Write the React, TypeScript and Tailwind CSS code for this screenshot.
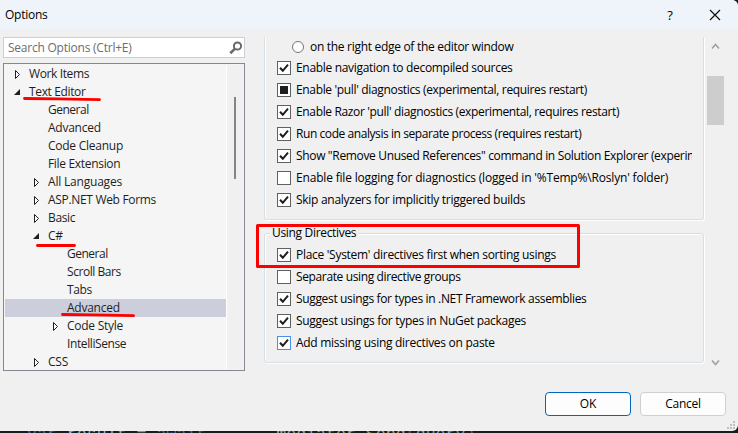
import React from "react";

const treeRows: { t: string; pad: string; arrow?: "open" | "closed"; sel?: boolean; track: string }[] = [
  { t: "Work Items", pad: "pl-[8px]", arrow: "closed", track: "tracking-[-0.38px]" },
  { t: "Text Editor", pad: "pl-[8px]", arrow: "open", track: "tracking-[-0.36px]" },
  { t: "General", pad: "pl-[27px]", track: "tracking-[-0.5px]" },
  { t: "Advanced", pad: "pl-[27px]", track: "tracking-[-0.25px]" },
  { t: "Code Cleanup", pad: "pl-[27px]", track: "tracking-[-0.25px]" },
  { t: "File Extension", pad: "pl-[27px]", track: "tracking-[-0.32px]" },
  { t: "All Languages", pad: "pl-[27px]", arrow: "closed", track: "tracking-[-0.2px]" },
  { t: "ASP.NET Web Forms", pad: "pl-[27px]", arrow: "closed", track: "tracking-[-0.32px]" },
  { t: "Basic", pad: "pl-[27px]", arrow: "closed", track: "tracking-[-0.35px]" },
  { t: "C#", pad: "pl-[27px]", arrow: "open", track: "tracking-[-0.25px]" },
  { t: "General", pad: "pl-[46px]", track: "tracking-[-0.5px]" },
  { t: "Scroll Bars", pad: "pl-[46px]", track: "tracking-[-0.45px]" },
  { t: "Tabs", pad: "pl-[46px]", track: "tracking-[-0.4px]" },
  { t: "Advanced", pad: "pl-[46px]", sel: true, track: "tracking-[-0.25px]" },
  { t: "Code Style", pad: "pl-[46px]", arrow: "closed", track: "tracking-[-0.25px]" },
  { t: "IntelliSense", pad: "pl-[46px]", track: "tracking-[-0.4px]" },
  { t: "CSS", pad: "pl-[27px]", arrow: "closed", track: "tracking-[-0.25px]" },
];

function Arrow({ kind }: { kind?: "open" | "closed" }) {
  return (
    <svg width="16" height="18" viewBox="0 0 16 18" className="shrink-0">
      {kind === "closed" && <path d="M2.5 5.5v8l4-4z" fill="#fff" stroke="#1e1e1e" />}
      {kind === "open" && <path d="M7 6v6H1z" fill="#1e1e1e" />}
    </svg>
  );
}

type State = "on" | "off" | "mixed";

function Check({ state, blue, children, track }: { state: State; blue?: boolean; children: string; track: string }) {
  return (
    <div className="flex h-[22px] items-center">
      <svg width="14" height="14" viewBox="0 0 14 14" className="shrink-0">
        <rect x="0.5" y="0.5" width="13" height="13" fill="#fff" stroke={blue ? "#4a90e8" : "#606060"} />
        {state === "on" && <path d="M3 6.8l2.8 3L11 3.6" fill="none" stroke="#1e1e1e" strokeWidth="2" />}
        {state === "mixed" && <rect x="3" y="3" width="8" height="8" fill="#1e1e1e" />}
      </svg>
      <span className={`ml-[5px] ${track}`}>{children}</span>
    </div>
  );
}

export default function App() {
  return (
    <div className="relative flex h-[433px] w-[738px] flex-col overflow-hidden bg-[#1b1b1f] font-['Open_Sans','Noto_Sans',sans-serif] text-[12px] leading-[18px] whitespace-nowrap text-black">
      <div className="flex h-[431px] shrink-0 flex-col overflow-hidden rounded-tr-[6px] rounded-br-[6px] bg-[#f0f0f0]">
        <header className="flex h-[29px] shrink-0 items-center bg-[#eef4f9] pl-[5px]">
          <span className="tracking-[-0.25px]">Options</span>
          <span className="ml-auto w-[6px] text-center text-[13px]">?</span>
          <svg width="12" height="12" viewBox="0 0 12 12" className="mr-[17px] ml-[36px]">
            <path d="M1 1l10 10M11 1L1 11" stroke="#111" strokeWidth="1.2" />
          </svg>
        </header>
        <div className="flex h-[342px] shrink-0">
          <aside className="ml-[3px] flex w-[242px] flex-col pt-[8px]">
            <div className="flex h-[21px] shrink-0 items-center border border-[#cccedb] bg-white pl-[4px] text-[#6d6d6d]">
              <span className="tracking-[-0.23px]">Search Options (Ctrl+E)</span>
              <svg width="14" height="14" viewBox="0 0 14 14" className="mr-[1px] ml-auto">
                <circle cx="8.5" cy="5" r="3.6" fill="none" stroke="#6a6a6a" strokeWidth="2" />
                <path d="M6 7.6L1.3 12.2" stroke="#6a6a6a" strokeWidth="2.6" />
              </svg>
            </div>
            <div className="mt-[5px] flex h-[308px] shrink-0 overflow-hidden border border-[#828790] bg-[#f5f5f5] p-px">
              <div className="flex w-[221px] flex-col text-[#1e1e1e]">
                {treeRows.map((r, i) => (
                  <div key={i} className={`flex h-[18px] shrink-0 items-center ${r.pad} ${r.sel ? "bg-[#cccedb]" : ""}`}>
                    <Arrow kind={r.arrow} />
                    <span className={r.track}>{r.t}</span>
                  </div>
                ))}
              </div>
              <div className="h-[304px] w-[17px] border-l border-white bg-[#f0f0f0] pt-[32px] pl-[7px]">
                <div className="h-[82px] w-[2px] bg-[#858585]" />
              </div>
            </div>
          </aside>
          <main className="ml-[19px] flex w-[440px] flex-col pt-[8px]">
            <section className="h-[183px] shrink-0 overflow-hidden rounded-b-[3px] border border-t-0 border-[#d5dfe5] pr-[11px] pl-[12px] shadow-[inset_1px_0_0_#fff,1px_1px_0_#fff]">
              <div className="overflow-hidden">
                <div className="flex h-[20px] items-center pl-[15px]">
                  <span className="size-[12px] rounded-full border border-[#757575] bg-white" />
                  <span className="ml-[6px] tracking-[-0.3px]">on the right edge of the editor window</span>
                </div>
                <Check state="on" track="tracking-[-0.32px]">Enable navigation to decompiled sources</Check>
                <Check state="mixed" track="tracking-[-0.34px]">Enable 'pull' diagnostics (experimental, requires restart)</Check>
                <Check state="on" track="tracking-[-0.35px]">Enable Razor 'pull' diagnostics (experimental, requires restart)</Check>
                <Check state="on" track="tracking-[-0.43px]">Run code analysis in separate process (requires restart)</Check>
                <Check state="on" track="tracking-[-0.34px]">Show "Remove Unused References" command in Solution Explorer (experimental)</Check>
                <Check state="off" track="tracking-[-0.18px]">Enable file logging for diagnostics (logged in '%Temp%\Roslyn' folder)</Check>
                <Check state="on" track="tracking-[-0.28px]">Skip analyzers for implicitly triggered builds</Check>
              </div>
            </section>
            <section className="mt-[13px] h-[130px] shrink-0 rounded-[3px] border border-[#d5dfe5] pl-[12px] shadow-[inset_1px_1px_0_#fff,1px_1px_0_#fff]">
              <div className="-mt-[10px] -ml-[7px] flex">
                <span className="bg-[#f0f0f0] px-[2px] tracking-[-0.32px]">Using Directives</span>
              </div>
              <div className="pt-[2px]">
                <Check state="on" track="tracking-[-0.29px]">Place 'System' directives first when sorting usings</Check>
                <Check state="off" track="tracking-[-0.37px]">Separate using directive groups</Check>
                <Check state="on" track="tracking-[-0.34px]">Suggest usings for types in .NET Framework assemblies</Check>
                <Check state="on" track="tracking-[-0.3px]">Suggest usings for types in NuGet packages</Check>
                <Check state="on" blue track="tracking-[-0.28px]">Add missing using directives on paste</Check>
              </div>
            </section>
          </main>
          <div className="ml-[3px] flex w-[17px] flex-col items-center pt-[14px]">
            <svg width="9" height="7" viewBox="0 0 9 7"><path d="M1 5.5l3.5-4 3.5 4" fill="none" stroke="#a0a0a0" strokeWidth="1.6" /></svg>
            <div className="mt-[26px] h-[49px] w-[17px] bg-[#cdcdcd]" />
            <svg width="9" height="7" viewBox="0 0 9 7" className="mt-auto mb-[5px]"><path d="M1 1.5l3.5 4 3.5-4" fill="none" stroke="#a0a0a0" strokeWidth="1.6" /></svg>
          </div>
        </div>
        <footer className="flex gap-[9px] pt-[21px] pl-[545px]">
          <button className="h-[24px] w-[86px] rounded-[4px] border border-[#0067c0] bg-[#fdfdfd] leading-[20px]">OK</button>
          <button className="h-[24px] w-[86px] rounded-[4px] border border-[#d0d0d0] bg-[#fdfdfd] leading-[20px] tracking-[-0.25px]">Cancel</button>
        </footer>
      </div>
      <div className="flex h-[2px] shrink-0 overflow-hidden pl-[27px] font-['Liberation_Mono',monospace] text-[16.6px] leading-[18px] whitespace-pre">
        <div className="-mt-[5px]">
          <span className="text-[#3f6f9c]">var </span>
          <span className="text-[#82b4cf]">result </span>
          <span className="text-[#909090]">= </span>
          <span className="text-[#3f6f9c]">await </span>
          <span className="ml-[60px] text-[#a0a0a0]">mediator </span>
          <span className="text-[#a8a37a]">Send</span>
          <span className="text-[#8a3fa0]">(</span>
          <span className="text-[#6fa0b8]">query</span>
          <span className="text-[#8a3fa0]">)</span>
        </div>
      </div>
      <svg width="738" height="433" className="absolute top-0 left-0">
        <g fill="none" stroke="#fe0000" strokeLinecap="round">
          <path d="M24.5 98.5l33 .3 42 .8" strokeWidth="2.8" />
          <path d="M37.5 245.5h37" strokeWidth="2.8" />
          <path d="M62.5 314.5l30 .3 41 .9" strokeWidth="2.8" />
          <rect x="257.5" y="225.5" width="321" height="41" strokeWidth="3" strokeLinejoin="round" />
        </g>
        <g fill="#bfbfbf">
          <path d="M733 421h2v2h-2zM730 424h2v2h-2zM733 424h2v2h-2zM727 427h2v2h-2zM730 427h2v2h-2zM733 427h2v2h-2z" />
        </g>
      </svg>
    </div>
  );
}
